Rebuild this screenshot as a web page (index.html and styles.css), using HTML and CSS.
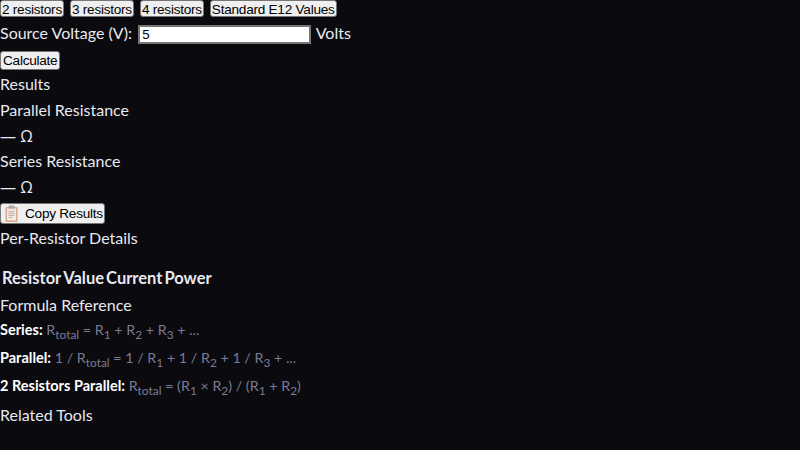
FILE: index.html
```html
<!DOCTYPE html>
<html lang="en">
<head>
    <meta charset="UTF-8">
    <title>Resistor Calculator</title>
    <link rel="stylesheet" href="styles.css">
</head>
<body>
    <div class="tabs">
        <button>2 resistors</button>
        <button>3 resistors</button>
        <button>4 resistors</button>
        <button>Standard E12 Values</button>
    </div>
    <div class="row">
        <label for="voltage">Source Voltage (V):</label>
        <input type="text" id="voltage" value="5">
        <span>Volts</span>
    </div>
    <div class="row"><button class="calc">Calculate</button></div>
    <div class="row">Results</div>
    <div class="row">Parallel Resistance</div>
    <div class="row value">— Ω</div>
    <div class="row">Series Resistance</div>
    <div class="row value">— Ω</div>
    <div class="row">
        <button class="copy">
            <svg class="clip" width="13" height="17" viewBox="0 0 13 17">
                <rect x="0.5" y="2" width="12" height="15" rx="1" fill="#dba98a"/>
                <rect x="2" y="3.5" width="9" height="12" fill="#f3e9e2"/>
                <rect x="3.5" y="0.5" width="6" height="3" rx="1" fill="#a9a9b0"/>
                <path d="M3.5 6.5h6M3.5 8.5h6M3.5 10.5h6M3.5 12.5h4" stroke="#b8b4b4" stroke-width="1"/>
            </svg>
            Copy Results
        </button>
    </div>
    <div class="row">Per-Resistor Details</div>
    <table>
        <tr>
            <th>Resistor</th>
            <th>Value</th>
            <th>Current</th>
            <th>Power</th>
        </tr>
    </table>
    <div class="row">Formula Reference</div>
    <p class="formula"><strong>Series:</strong> R<sub>total</sub> = R<sub>1</sub> + R<sub>2</sub> + R<sub>3</sub> + ...</p>
    <p class="formula"><strong>Parallel:</strong> 1 / R<sub>total</sub> = 1 / R<sub>1</sub> + 1 / R<sub>2</sub> + 1 / R<sub>3</sub> + ...</p>
    <p class="formula"><strong>2 Resistors Parallel:</strong> R<sub>total</sub> = (R<sub>1</sub> × R<sub>2</sub>) / (R<sub>1</sub> + R<sub>2</sub>)</p>
    <div class="row">Related Tools</div>
</body>
</html>
```

FILE: styles.css
```css
body {
    margin: 0;
    background-color: #0a0a0f;
    color: #e8e8f0;
    font-family: Lato, "Open Sans", sans-serif;
    font-size: 16px;
    line-height: 25.6px;
}

button {
    font-family: "Liberation Sans", Arial, sans-serif;
    font-size: 13.6px;
    letter-spacing: -0.25px;
    color: #000;
    background-color: #efefef;
    border: 1px solid #767676;
    border-radius: 3px;
    padding: 1px;
    line-height: 15px;
}

.tabs {
    display: flex;
    gap: 6px;
    height: 21.2px;
}

.tabs button {
    height: 17px;
}

.row {
    height: 25.6px;
    line-height: 24px;
}

.value {
    font-family: "Open Sans", sans-serif;
    line-height: 25.6px;
}

input {
    width: 165px;
    height: 15px;
    margin: 0 1px 0 2px;
    padding: 0 2px;
    border: 2px solid #767676;
    font-family: "Liberation Sans", Arial, sans-serif;
    font-size: 13.33px;
    vertical-align: baseline;
}

.calc {
    padding: 1px 2px;
}

.copy {
    display: inline-flex;
    align-items: center;
    gap: 7px;
    height: 21px;
    margin-top: 2.4px;
    padding: 1px 1px 1px 4px;
    vertical-align: top;
}

table {
    border-spacing: 2px;
    margin: 12px 0 0;
}

th {
    padding: 0;
    font-size: 16.5px;
    font-weight: 700;
}

.formula {
    margin: 0 0 5.6px;
    font-size: 14.3px;
    line-height: 22.4px;
    color: #7a7b94;
}

.formula sub {
    line-height: 0;
}

.formula strong {
    font-size: 14.5px;
    color: #fff;
}
```
